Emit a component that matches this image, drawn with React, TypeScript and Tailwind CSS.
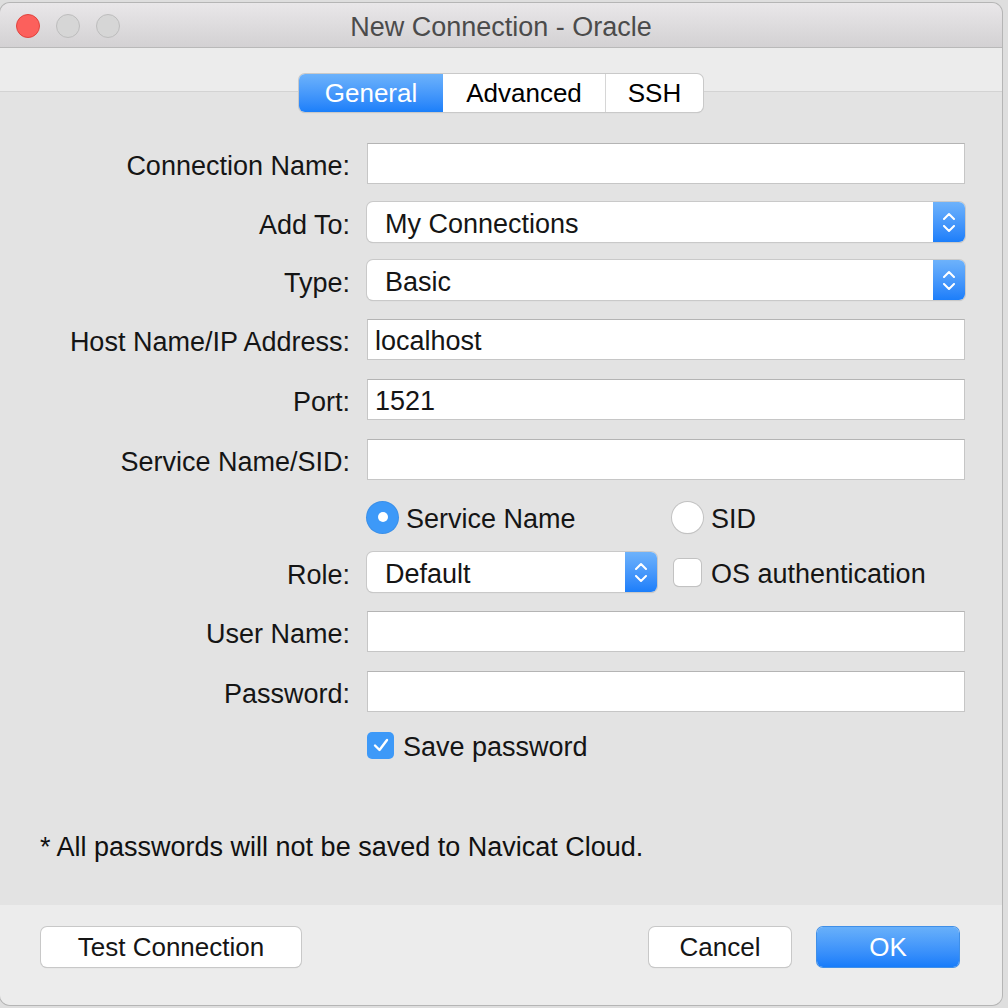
import React from 'react';

const font = { fontFamily: '"Liberation Sans", Arial, sans-serif' };

function Stepper() {
  return (
    <div className="flex h-full w-[32px] flex-col items-center justify-center gap-[5px] rounded-r-[6px] bg-gradient-to-b from-[#6db2fb] to-[#1b7efa]">
      <svg width="14" height="8" viewBox="0 0 14 8">
        <path d="M2 7 L7 2 L12 7" fill="none" stroke="white" strokeWidth="2" strokeLinecap="round" strokeLinejoin="round" />
      </svg>
      <svg width="14" height="8" viewBox="0 0 14 8">
        <path d="M2 1 L7 6 L12 1" fill="none" stroke="white" strokeWidth="2" strokeLinecap="round" strokeLinejoin="round" />
      </svg>
    </div>
  );
}

function Select({ value, className = '' }: { value: string; className?: string }) {
  return (
    <div className={`flex h-[40px] items-stretch rounded-[6px] bg-white shadow-[0_0_0_1px_#c9c9c9,0_1px_1px_rgba(0,0,0,0.18)] ${className}`}>
      <div className="flex flex-1 items-center pl-[18px] pt-[3px] text-[27px] leading-[30px] text-[#151515]">{value}</div>
      <Stepper />
    </div>
  );
}

function TextInput({ value = '' }: { value?: string }) {
  return (
    <div className="flex h-[41px] items-center border border-[#c6c6c6] border-t-[#b4b4b4] bg-white pl-[7px] pt-[3px] text-[27px] leading-[30px] text-[#151515]">
      {value}
    </div>
  );
}

function Label({ children }: { children: React.ReactNode }) {
  return <div className="flex items-center justify-end pt-[5px] text-[27px] leading-[30px] text-[#151515]">{children}</div>;
}

function Button({ children, primary = false, className = '' }: { children: React.ReactNode; primary?: boolean; className?: string }) {
  return (
    <div
      className={`flex h-[40px] items-center justify-center rounded-[6px] text-[26px] ${
        primary
          ? 'bg-gradient-to-b from-[#68b0fa] to-[#167cfa] text-white shadow-[0_0_0_1px_#3f8fe8]'
          : 'bg-white text-[#151515] shadow-[0_0_0_1px_#c8c8c8,0_1px_1px_rgba(0,0,0,0.2)]'
      } ${className}`}
    >
      {children}
    </div>
  );
}

export default function App() {
  return (
    <div className="h-[1008px] w-[1008px] bg-[#dedede] pb-[3px] pr-[6px] pt-[3px]" style={font}>
      <div className="flex h-full flex-col overflow-hidden rounded-[10px] shadow-[0_0_0_1px_#b5b5b5]">
        {/* Title bar */}
        <div className="relative flex h-[45px] items-center justify-center border-b border-[#b9b9b9] bg-gradient-to-b from-[#e9e7e9] to-[#d3d1d3] pt-[4px]">
          <div className="absolute left-[16px] top-[11px] flex gap-[16px]">
            <div className="h-[24px] w-[24px] rounded-full border border-[#e0443e] bg-[#fc605c]" />
            <div className="h-[24px] w-[24px] rounded-full border border-[#bdbdbd] bg-[#d6d6d6]" />
            <div className="h-[24px] w-[24px] rounded-full border border-[#bdbdbd] bg-[#d6d6d6]" />
          </div>
          <span className="text-[27px] text-[#4b4b4b]">New Connection - Oracle</span>
        </div>

        {/* Toolbar with tabs */}
        <div className="relative z-10 flex h-[44px] justify-center border-b border-[#d3d3d3] bg-[#ececec]">
          <div className="mt-[26px] flex h-[38px] overflow-hidden rounded-[6px] bg-white text-[26px] shadow-[0_0_0_1px_#c9c9c9,0_1px_1px_rgba(0,0,0,0.18)]">
            <div className="flex w-[144px] items-center justify-center bg-gradient-to-b from-[#6cb2fb] to-[#1a7ffa] text-white">General</div>
            <div className="flex w-[163px] items-center justify-center border-r border-[#d6d6d6] text-black">Advanced</div>
            <div className="flex w-[97px] items-center justify-center text-black">SSH</div>
          </div>
        </div>

        {/* Content */}
        <div className="flex flex-1 flex-col bg-[#e3e3e3] pr-[37px] pt-[51px]">
          <div className="grid grid-cols-[350px_1fr] gap-x-[17px]">
            <Label>Connection Name:</Label>
            <TextInput />
            <div className="col-span-2 h-[18px]" />
            <Label>Add To:</Label>
            <Select value="My Connections" />
            <div className="col-span-2 h-[18px]" />
            <Label>Type:</Label>
            <Select value="Basic" />
            <div className="col-span-2 h-[19px]" />
            <Label>Host Name/IP Address:</Label>
            <TextInput value="localhost" />
            <div className="col-span-2 h-[19px]" />
            <Label>Port:</Label>
            <TextInput value="1521" />
            <div className="col-span-2 h-[19px]" />
            <Label>Service Name/SID:</Label>
            <TextInput />
            <div className="col-span-2 h-[21px]" />
            <div />
            <div className="flex h-[32px] items-center text-[27px] leading-[30px] text-[#151515]">
              <div className="flex w-[305px] items-center">
                <div className="flex h-[31px] w-[31px] items-center justify-center rounded-full bg-[#3d99f8] shadow-[0_0_0_1px_#3a8fe8]">
                  <div className="h-[10px] w-[10px] rounded-full bg-white" />
                </div>
                <span className="ml-[8px] pt-[3px]">Service Name</span>
              </div>
              <div className="flex items-center">
                <div className="h-[31px] w-[31px] rounded-full bg-white shadow-[0_0_0_1px_#c2c2c2,0_1px_1px_rgba(0,0,0,0.15)]" />
                <span className="ml-[8px] pt-[3px]">SID</span>
              </div>
            </div>
            <div className="col-span-2 h-[19px]" />
            <Label>Role:</Label>
            <div className="flex items-center">
              <Select value="Default" className="w-[290px]" />
              <div className="ml-[17px] h-[27px] w-[27px] rounded-[5px] bg-white shadow-[0_0_0_1px_#c2c2c2,0_1px_1px_rgba(0,0,0,0.15)]" />
              <span className="ml-[10px] pt-[3px] text-[27px] leading-[30px] text-[#151515]">OS authentication</span>
            </div>
            <div className="col-span-2 h-[19px]" />
            <Label>User Name:</Label>
            <TextInput />
            <div className="col-span-2 h-[19px]" />
            <Label>Password:</Label>
            <TextInput />
            <div className="col-span-2 h-[19px]" />
            <div />
            <div className="flex h-[28px] items-center text-[27px] leading-[30px] text-[#151515]">
              <div className="flex h-[27px] w-[27px] items-center justify-center rounded-[5px] bg-[#3d99f8]">
                <svg width="18" height="16" viewBox="0 0 18 16">
                  <path d="M3 8.5 L7.5 13 L15 3" fill="none" stroke="white" strokeWidth="2.4" strokeLinecap="round" strokeLinejoin="round" />
                </svg>
              </div>
              <span className="ml-[9px] pt-[3px]">Save password</span>
            </div>
          </div>
          <div className="ml-[40px] mt-[73px] text-[27px] leading-[30px] text-[#111]">* All passwords will not be saved to Navicat Cloud.</div>
        </div>

        {/* Footer */}
        <div className="flex h-[100px] items-start bg-[#ececec] pl-[41px] pr-[43px] pt-[22px]">
          <Button className="w-[260px]">Test Connection</Button>
          <div className="flex-1" />
          <Button className="w-[142px]">Cancel</Button>
          <Button primary className="ml-[26px] w-[142px]">OK</Button>
        </div>
      </div>
    </div>
  );
}
